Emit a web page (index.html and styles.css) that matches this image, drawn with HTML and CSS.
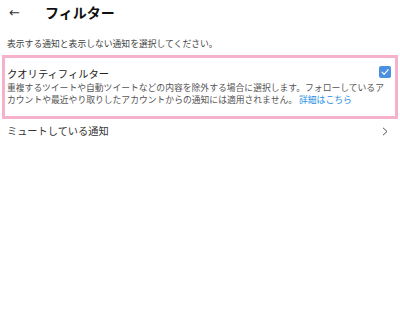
FILE: index.html
```html
<!DOCTYPE html>
<html lang="ja">
<head>
  <meta charset="UTF-8" />
  <meta name="viewport" content="width=device-width, initial-scale=1.0" />
  <title>フィルター</title>
  <link rel="stylesheet" href="styles.css">
</head>
<body>
  <!-- ヘッダー -->
  <div class="header">
    <span class="back">←</span>
    <span class="title">フィルター</span>
  </div>

  <p class="intro">表示する通知と表示しない通知を選択してください。</p>

  <!-- クオリティフィルター -->
  <div class="filter-box">
    <div class="filter-head">
      <span class="filter-title">クオリティフィルター</span>
      <span class="check">
        <svg width="12" height="12" viewBox="0 0 12 12">
          <path d="M3 6.2 L5.1 8.3 L9.2 3.6" fill="none" stroke="#fff" stroke-width="1.1" stroke-linecap="round" stroke-linejoin="round"/>
        </svg>
      </span>
    </div>
    <p class="filter-desc">重複するツイートや自動ツイートなどの内容を除外する場合に選択します。フォローしているアカウントや最近やり取りしたアカウントからの通知には適用されません。 <a href="#">詳細はこちら</a></p>
  </div>

  <!-- ミュート -->
  <div class="row">
    <span>ミュートしている通知</span>
    <svg class="chevron" width="6" height="9" viewBox="0 0 6 9">
      <path d="M1 0.8 L5 4.5 L1 8.2" fill="none" stroke="#555" stroke-width="1"/>
    </svg>
  </div>
</body>
</html>
```

FILE: styles.css
```css
* {
  box-sizing: border-box;
}
body {
  margin: 0;
  background: #fff;
  font-family: "Noto Sans CJK JP", "Noto Sans", sans-serif;
  color: #222;
}

/* ヘッダー */
.header {
  display: flex;
  align-items: center;
  height: 24px;
  padding: 0 9px;
}
.back {
  width: 36px;
  font-size: 13px;
  font-family: "DejaVu Sans", sans-serif;
  color: #333;
}
.title {
  font-size: 14px;
  font-weight: 700;
  color: #111;
}

.intro {
  margin: 14px 0 0;
  padding: 0 7px;
  font-size: 8.8px;
  line-height: 12px;
  color: #444;
}

/* ピンクの枠 */
.filter-box {
  margin: 5px 2px 0;
  border: 3px solid #f5b2cd;
  padding: 9px 4px 10px 2px;
}
.filter-head {
  display: flex;
  justify-content: space-between;
  align-items: flex-start;
  height: 15px;
}
.filter-title {
  font-size: 10.3px;
  line-height: 14px;
  color: #222;
}
.check {
  width: 12px;
  height: 12px;
  margin-top: -1px;
  border-radius: 2px;
  background: #4a8fe0;
  display: flex;
}
.filter-desc {
  margin: 0;
  font-size: 8.8px;
  line-height: 12px;
  color: #555;
}
.filter-desc a {
  display: inline-block;
  line-height: 12px;
  color: #2b8fe0;
  text-decoration: none;
}

.row {
  display: flex;
  justify-content: space-between;
  align-items: center;
  margin-top: 5px;
  padding: 0 12px 0 7px;
  font-size: 10.2px;
  line-height: 14px;
  color: #333;
}
```
